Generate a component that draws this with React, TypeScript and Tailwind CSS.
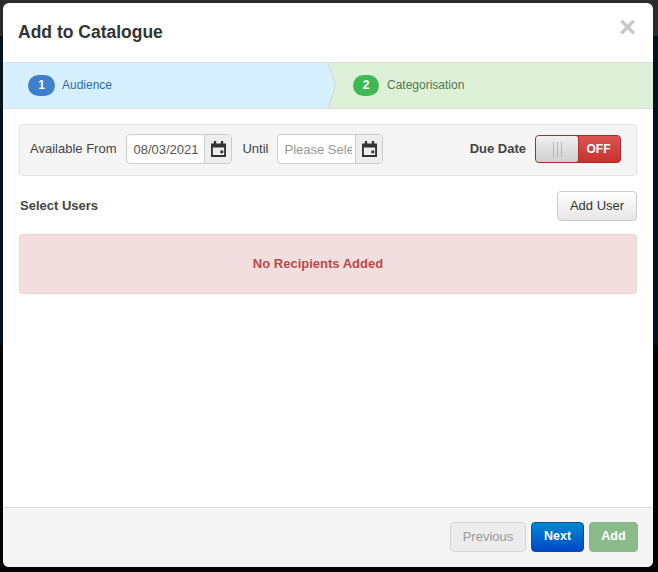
const font = { fontFamily: '"Liberation Sans", Arial, sans-serif' };

function Calendar() {
  return (
    <svg width="15" height="16" viewBox="0 0 16 17" fill="#333">
      <path d="M3 0h2.5v2.5h5V0H13v2.5h3V17H0V2.5h3V0Zm-1 7v8h12V7H2Zm8 3h3v3h-3v-3Z" fillRule="evenodd" />
    </svg>
  );
}

function DateField({ value, placeholder }: { value?: string; placeholder?: string }) {
  return (
    <div className="flex h-[30px] w-[106px] rounded-[4px] border border-[#ccc] bg-white overflow-hidden">
      <div className={`mr-[3px] flex-1 overflow-hidden whitespace-nowrap pl-[6px] pt-[6px] text-[13px] leading-[17px] ${value ? "text-[#555]" : "text-[#999]"}`}>
        {value ?? placeholder}
      </div>
      <div className="flex w-[27px] shrink-0 items-center justify-center border-l border-[#ccc] bg-[#eee]">
        <Calendar />
      </div>
    </div>
  );
}

export default function App() {
  return (
    <div style={font} className="h-[572px] w-[658px] overflow-hidden bg-[linear-gradient(to_bottom,#2b2b2b_36px,#04131f_36px,#04131f_345px,#050505_345px)] pl-[3px] pt-[3px]">
      <div className="flex h-[564px] w-[650px] flex-col overflow-hidden rounded-[6px] bg-white text-[#333]">
        <div className="relative h-[59px] shrink-0 pl-[15px] pt-[17px]">
          <h4 className="text-[17.5px] font-bold leading-[24px] text-[#333]">Add to Catalogue</h4>
          <span className="absolute right-[17px] top-[10px] text-[29px] font-bold leading-[29px] text-[#c7c7c7]">×</span>
        </div>

        <div className="relative flex h-[47px] shrink-0 border-y border-[#ddd]">
          <div className="flex w-[326px] items-center bg-[#d6effc] pb-px pl-[25px]">
            <span className="flex h-[21px] w-[27px] items-center justify-center rounded-full bg-[#3f7fcb] text-[12px] font-bold text-white">1</span>
            <span className="ml-[7px] text-[12px] text-[#2f6ea5]">Audience</span>
          </div>
          <div className="flex flex-1 items-center bg-[#dff0d8] pb-px pl-[24px]">
            <span className="flex h-[21px] w-[26px] items-center justify-center rounded-full bg-[#3fb953] text-[12px] font-bold text-white">2</span>
            <span className="ml-[8px] text-[12px] text-[#4d7a4d]">Categorisation</span>
          </div>
          <svg className="absolute left-[325px] top-0" width="10" height="45" viewBox="0 0 10 45">
            <path d="M0 0L8 22.5L0 45H0Z" fill="#d6effc" />
            <path d="M0 0L8 22.5L0 45" fill="none" stroke="#c9d9dc" strokeWidth="1" />
          </svg>
        </div>

        <div className="flex-1 px-[16px] pt-[15px]">
          <div className="flex h-[52px] items-center rounded-[4px] border border-[#e3e3e3] bg-[#f5f5f5] pb-[2px] pl-[10px] pr-[15px]">
            <span className="text-[13px] text-[#444]">Available From</span>
            <div className="ml-[10px]"><DateField value="08/03/2021" /></div>
            <span className="ml-[10px] text-[13px] text-[#444]">Until</span>
            <div className="ml-[9px]"><DateField placeholder="Please Select" /></div>
            <span className="ml-auto text-[13px] font-bold text-[#444]">Due Date</span>
            <div className="ml-[9px] flex h-[28px] w-[86px] overflow-hidden rounded-[4px] border border-[#b02a2a] bg-[#d2413a]">
              <div className="flex w-[43px] items-center justify-center gap-[3px] rounded-r-[3px] border-r border-[#b02a2a] bg-gradient-to-b from-[#f0f0f0] to-[#cfcfcf]">
                <i className="h-[15px] w-px bg-[#b5b5b5]" />
                <i className="h-[15px] w-px bg-[#b5b5b5]" />
                <i className="h-[15px] w-px bg-[#b5b5b5]" />
              </div>
              <div className="flex flex-1 items-center justify-center bg-gradient-to-b from-[#d9534f] to-[#c9302c] pr-[2px] text-[12px] font-bold text-white">OFF</div>
            </div>
          </div>

          <div className="mt-[15px] flex items-center justify-between">
            <span className="pl-px text-[13px] font-bold text-[#444]">Select Users</span>
            <button className="h-[30px] w-[80px] rounded-[4px] border border-[#ccc] bg-gradient-to-b from-white to-[#e6e6e6] text-[13px] text-[#333]">Add User</button>
          </div>

          <div className="mt-[13px] flex h-[60px] items-center justify-center rounded-[4px] border border-[#ebd5d5] bg-[#f2dede] pr-[20px] text-[13px] font-bold text-[#b94a48]">
            No Recipients Added
          </div>
        </div>

        <div className="flex h-[60px] shrink-0 items-start justify-end gap-[5px] border-t border-[#ddd] bg-[#f5f5f5] pr-[15px] pt-[14px]">
          <button className="h-[30px] w-[76px] rounded-[4px] border border-[#d5d5d5] bg-[#ececec] pb-px text-[13px] text-[#999]">Previous</button>
          <button className="h-[30px] w-[53px] rounded-[4px] border border-[#04519b] bg-gradient-to-b from-[#0088cc] to-[#0044cc] pb-px text-[12.5px] font-bold text-white">Next</button>
          <button className="h-[30px] w-[49px] rounded-[4px] border border-[#86b886] bg-[#8abb8a] pb-px text-[12.5px] font-bold text-white">Add</button>
        </div>
      </div>
    </div>
  );
}
